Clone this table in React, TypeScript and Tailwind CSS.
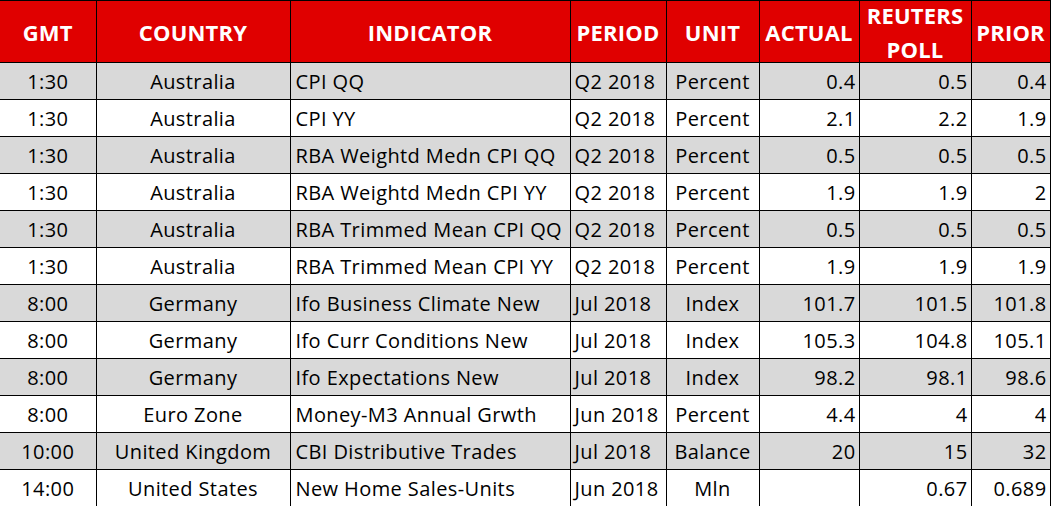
const rows: string[][] = [
  ["1:30", "Australia", "CPI QQ", "Q2 2018", "Percent", "0.4", "0.5", "0.4"],
  ["1:30", "Australia", "CPI YY", "Q2 2018", "Percent", "2.1", "2.2", "1.9"],
  ["1:30", "Australia", "RBA Weightd Medn CPI QQ", "Q2 2018", "Percent", "0.5", "0.5", "0.5"],
  ["1:30", "Australia", "RBA Weightd Medn CPI YY", "Q2 2018", "Percent", "1.9", "1.9", "2"],
  ["1:30", "Australia", "RBA Trimmed Mean CPI QQ", "Q2 2018", "Percent", "0.5", "0.5", "0.5"],
  ["1:30", "Australia", "RBA Trimmed Mean CPI YY", "Q2 2018", "Percent", "1.9", "1.9", "1.9"],
  ["8:00", "Germany", "Ifo Business Climate New", "Jul 2018", "Index", "101.7", "101.5", "101.8"],
  ["8:00", "Germany", "Ifo Curr Conditions New", "Jul 2018", "Index", "105.3", "104.8", "105.1"],
  ["8:00", "Germany", "Ifo Expectations New", "Jul 2018", "Index", "98.2", "98.1", "98.6"],
  ["8:00", "Euro Zone", "Money-M3 Annual Grwth", "Jun 2018", "Percent", "4.4", "4", "4"],
  ["10:00", "United Kingdom", "CBI Distributive Trades", "Jul 2018", "Balance", "20", "15", "32"],
  ["14:00", "United States", "New Home Sales-Units", "Jun 2018", "Mln", "", "0.67", "0.689"],
];

const align = [
  "text-center",
  "text-center",
  "text-left pl-[5px]",
  "text-left pl-[4px]",
  "text-center",
  "text-right pr-[3px]",
  "text-right pr-[3px]",
  "text-right pr-[3px]",
];

export default function App() {
  return (
    <div className="w-[1051px] h-[506px] bg-white overflow-hidden font-['Open_Sans','Liberation_Sans',sans-serif]">
      <table className="table-fixed border-collapse w-[1050px] text-black">
        <colgroup>
          <col className="w-[96px]" />
          <col className="w-[194px]" />
          <col className="w-[280px]" />
          <col className="w-[96px]" />
          <col className="w-[93px]" />
          <col className="w-[100px]" />
          <col className="w-[112px]" />
          <col className="w-[79px]" />
        </colgroup>
        <thead>
          <tr className="h-[62px] bg-[#e00000] text-white font-bold text-[22px] leading-[30px] tracking-[0.2px]">
            <th className="border border-black border-l-0 pt-[1px]">GMT</th>
            <th className="border border-black pt-[1px]">COUNTRY</th>
            <th className="border border-black pt-[1px]">INDICATOR</th>
            <th className="border border-black pt-[1px]">PERIOD</th>
            <th className="border border-black pt-[1px]">UNIT</th>
            <th className="border border-black pt-[1px]">ACTUAL</th>
            <th className="border border-black p-0">
              <div className="h-[61px] overflow-hidden flex flex-col justify-center items-center leading-[34px]">
                <span className="shrink-0">REUTERS</span>
                <span className="shrink-0">POLL</span>
              </div>
            </th>
            <th className="border border-black pt-[1px]">PRIOR</th>
          </tr>
        </thead>
        <tbody>
          {rows.map((r, i) => (
            <tr key={i} className={`h-[37px] text-[20px] tracking-[0.4px] ${i % 2 === 0 ? "bg-[#d9d9d9]" : "bg-white"}`}>
              {r.map((c, j) => (
                <td
                  key={j}
                  className={`border border-black whitespace-nowrap overflow-hidden pt-[2px] ${j === 0 ? "border-l-0" : ""} ${align[j]}`}
                >
                  {c}
                </td>
              ))}
            </tr>
          ))}
        </tbody>
      </table>
    </div>
  );
}
